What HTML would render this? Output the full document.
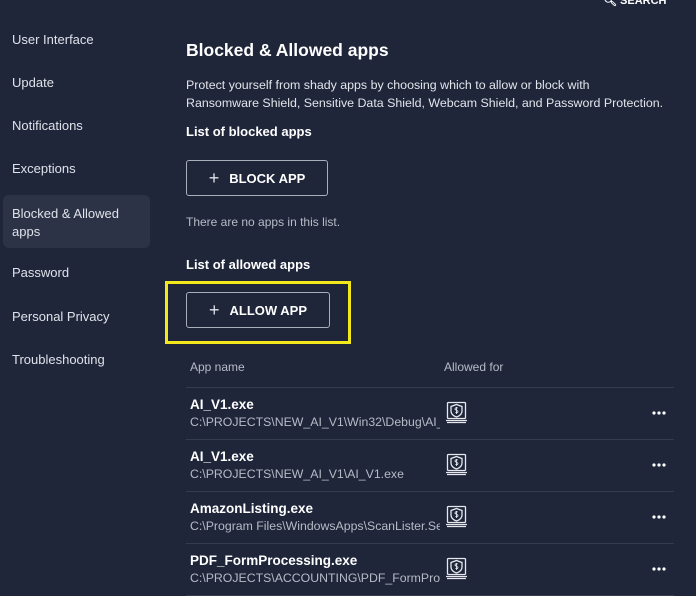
<!DOCTYPE html>
<html><head><style>
*{margin:0;padding:0;box-sizing:border-box}
body{width:696px;height:596px;background:#1f263a;font-family:"Liberation Sans",sans-serif;color:#e6e8ee;position:relative;overflow:hidden}
.a{position:absolute;white-space:nowrap}
.nav{left:12px;font-size:13px;color:#dfe2ea}
.sel{position:absolute;left:3px;top:195px;width:147px;height:53px;background:#2c3347;border-radius:6px}
.btn{position:absolute;border:1px solid #a9aebb;border-radius:3px;color:#fff;font-weight:bold;font-size:13px;display:flex;align-items:center;justify-content:center}
.btn span{font-weight:normal;font-size:18px;margin-right:10px;color:#dfe2ea}
.sep{position:absolute;left:186px;width:488px;height:1px;background:#353c4f}
.nm{left:190px;font-weight:bold;font-size:13.5px;color:#fff}
.pt{left:190px;font-size:12.3px;color:#b7bbc6;width:250px;overflow:hidden}
</style></head><body>
<div class="a" style="left:603px;top:-6px;font-size:11px;font-weight:bold;color:#fff">&#x1F50D;&#xFE0E; SEARCH</div>
<div class="sel"></div>
<div class="a nav" style="top:32px">User Interface</div>
<div class="a nav" style="top:75px">Update</div>
<div class="a nav" style="top:118px">Notifications</div>
<div class="a nav" style="top:161px">Exceptions</div>
<div class="a nav" style="top:205px;line-height:18px">Blocked &amp; Allowed<br>apps</div>
<div class="a nav" style="top:265px">Password</div>
<div class="a nav" style="top:309px">Personal Privacy</div>
<div class="a nav" style="top:352px">Troubleshooting</div>

<div class="a" style="left:186px;top:40px;font-size:17.5px;font-weight:bold;color:#fff">Blocked &amp; Allowed apps</div>
<div class="a" style="left:186px;top:76px;font-size:12.4px;line-height:18px;color:#e2e4ea">Protect yourself from shady apps by choosing which to allow or block with<br>Ransomware Shield, Sensitive Data Shield, Webcam Shield, and Password Protection.</div>
<div class="a" style="left:186px;top:124px;font-size:13px;font-weight:bold;color:#fff">List of blocked apps</div>
<div class="btn" style="left:186px;top:160px;width:142px;height:36px"><span>+</span>BLOCK APP</div>
<div class="a" style="left:186px;top:215px;font-size:12px;color:#b7bbc6">There are no apps in this list.</div>
<div class="a" style="left:186px;top:257px;font-size:13px;font-weight:bold;color:#fff">List of allowed apps</div>
<div style="position:absolute;left:165px;top:281px;width:186px;height:63px;border:3px solid #f2e81c"></div>
<div class="btn" style="left:186px;top:292px;width:144px;height:36px"><span>+</span>ALLOW APP</div>
<div class="a" style="left:190px;top:360px;font-size:12px;color:#b7bbc6">App name</div>
<div class="a" style="left:444px;top:360px;font-size:12px;color:#b7bbc6">Allowed for</div>
<div class="sep" style="top:387px"></div>
<div class="sep" style="top:439px"></div>
<div class="sep" style="top:491px"></div>
<div class="sep" style="top:543px"></div>
<div class="sep" style="top:595px"></div>

<div class="a nm" style="top:397px">AI_V1.exe</div>
<div class="a pt" style="top:415px">C:\PROJECTS\NEW_AI_V1\Win32\Debug\AI_V1.exe</div>
<div class="a nm" style="top:449px">AI_V1.exe</div>
<div class="a pt" style="top:467px">C:\PROJECTS\NEW_AI_V1\AI_V1.exe</div>
<div class="a nm" style="top:501px">AmazonListing.exe</div>
<div class="a pt" style="top:519px">C:\Program Files\WindowsApps\ScanLister.Setup</div>
<div class="a nm" style="top:553px">PDF_FormProcessing.exe</div>
<div class="a pt" style="top:571px">C:\PROJECTS\ACCOUNTING\PDF_FormProcessing</div>

<svg style="position:absolute;left:0;top:0" width="696" height="596">
<defs><g id="ic" fill="none" stroke="#e6e8ee" stroke-width="1.3">
<rect x="1.5" y="0.5" width="18" height="16" rx="1"/>
<path d="M10.5 2.5 L16 4.5 V9 C16 12 13.5 14 10.5 15 C7.5 14 5 12 5 9 V4.5 Z"/>
<path d="M0 18.5 H21 M1 20.5 H20"/>
<path d="M11.8 6 C10 5.3 9 6 9 7 C9 8.5 12 8 12 9.5 C12 10.5 11 11 9.3 10.5 M10.5 5 V12" stroke-width="0.9"/>
</g></defs>
<use href="#ic" x="446" y="402"/>
<use href="#ic" x="446" y="454"/>
<use href="#ic" x="446" y="506"/>
<use href="#ic" x="446" y="558"/>
<g fill="#fff">
<circle cx="654" cy="413" r="1.6"/><circle cx="659" cy="413" r="1.6"/><circle cx="664" cy="413" r="1.6"/>
<circle cx="654" cy="465" r="1.6"/><circle cx="659" cy="465" r="1.6"/><circle cx="664" cy="465" r="1.6"/>
<circle cx="654" cy="517" r="1.6"/><circle cx="659" cy="517" r="1.6"/><circle cx="664" cy="517" r="1.6"/>
<circle cx="654" cy="569" r="1.6"/><circle cx="659" cy="569" r="1.6"/><circle cx="664" cy="569" r="1.6"/>
</g>
</svg>
</body></html>
